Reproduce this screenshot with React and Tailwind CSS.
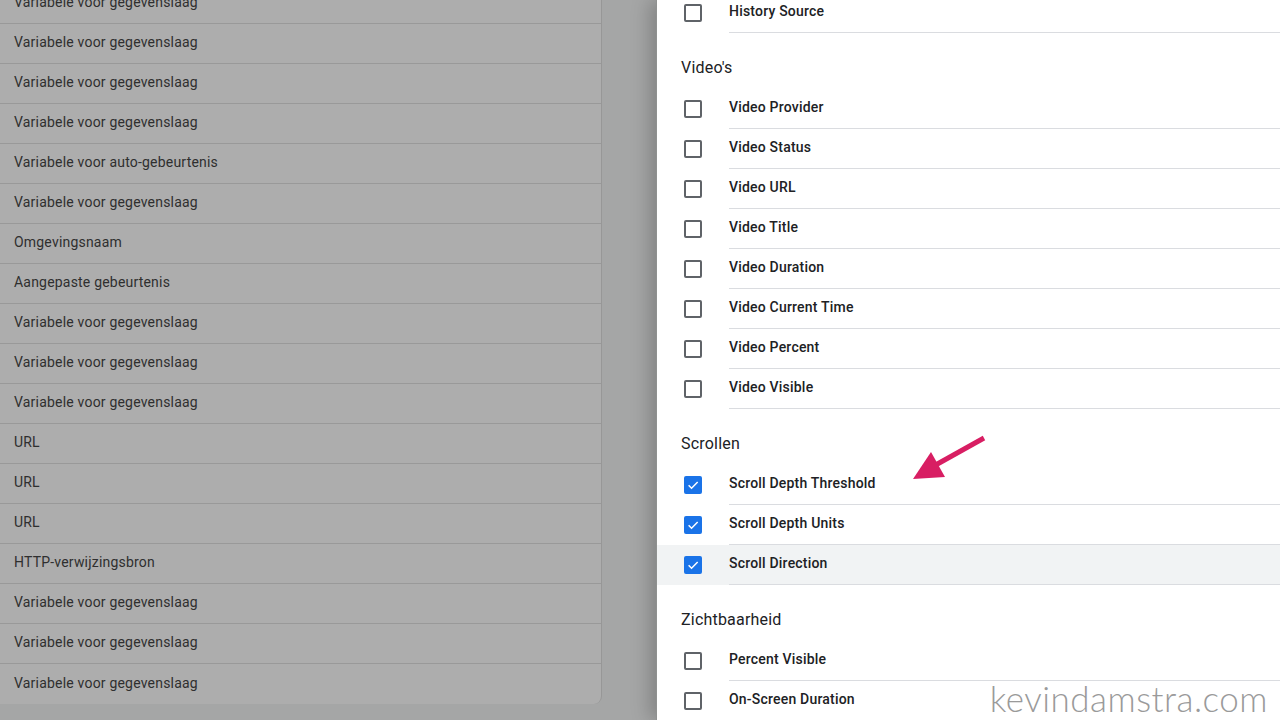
import React from "react";

const leftRows = [
  "Variabele voor gegevenslaag",
  "Variabele voor gegevenslaag",
  "Variabele voor gegevenslaag",
  "Variabele voor gegevenslaag",
  "Variabele voor auto-gebeurtenis",
  "Variabele voor gegevenslaag",
  "Omgevingsnaam",
  "Aangepaste gebeurtenis",
  "Variabele voor gegevenslaag",
  "Variabele voor gegevenslaag",
  "Variabele voor gegevenslaag",
  "URL",
  "URL",
  "URL",
  "HTTP-verwijzingsbron",
  "Variabele voor gegevenslaag",
  "Variabele voor gegevenslaag",
  "Variabele voor gegevenslaag",
];

function Checkbox({ checked }) {
  if (checked) {
    return (
      <div className="w-[18px] h-[18px] rounded-[2px] bg-[#1a73e8] flex items-center justify-center shrink-0">
        <svg width="14" height="14" viewBox="0 0 24 24" fill="none">
          <path d="M4.5 12.5l5 5L20 7" stroke="white" strokeWidth="2.6" />
        </svg>
      </div>
    );
  }
  return <div className="w-[18px] h-[18px] rounded-[2px] border-2 border-[#5f6368] shrink-0" />;
}

function Row({ label, checked, highlight }) {
  return (
    <div className={`flex items-center h-10 ${highlight ? "bg-[#f1f3f4]" : ""}`}>
      <div className="w-[72px] pl-[27px] shrink-0 flex items-center">
        <Checkbox checked={checked} />
      </div>
      <div className="flex-1 h-full flex items-center pb-[2px] border-b border-[#dadce0] text-[14px] font-medium tracking-[0.2px] text-[#202124]">
        {label}
      </div>
    </div>
  );
}

function Header({ children }) {
  return (
    <div className="pl-6 pt-6 pb-[10px] h-14 text-[16px] leading-[22px] tracking-[0.2px] text-[#202124]">{children}</div>
  );
}

export default function App() {
  return (
    <div
      className="relative w-[1280px] h-[720px] overflow-hidden flex bg-[#a5a6a6]"
      style={{ fontFamily: "Roboto, 'Liberation Sans', sans-serif" }}
    >
      <div className="w-[656px] shrink-0">
        <div className="w-[602px] -mt-[16px] bg-[#adadad] border-r border-[#979797] rounded-br-[8px] overflow-hidden">
          {leftRows.map((t, i) => (
            <div
              key={i}
              className={`h-10 flex items-center pl-[14px] pb-[2px] text-[14px] tracking-[0.2px] text-[#2f2f2f] ${
                i < leftRows.length - 1 ? "border-b border-[#999999]" : ""
              }`}
            >
              {t}
            </div>
          ))}
        </div>
      </div>
      <div className="flex-1 bg-white shadow-[-6px_0_18px_rgba(0,0,0,0.22)] border-l border-[#8f9190]">
        <div className="-mt-[7px]">
          <Row label="History Source" />
          <Header>Video's</Header>
          <Row label="Video Provider" />
          <Row label="Video Status" />
          <Row label="Video URL" />
          <Row label="Video Title" />
          <Row label="Video Duration" />
          <Row label="Video Current Time" />
          <Row label="Video Percent" />
          <Row label="Video Visible" />
          <Header>Scrollen</Header>
          <Row label="Scroll Depth Threshold" checked />
          <Row label="Scroll Depth Units" checked />
          <Row label="Scroll Direction" checked highlight />
          <Header>Zichtbaarheid</Header>
          <Row label="Percent Visible" />
          <Row label="On-Screen Duration" />
        </div>
      </div>
      <svg
        className="absolute left-0 top-0 pointer-events-none"
        width="1280"
        height="720"
        viewBox="0 0 1280 720"
      >
        <line x1="984" y1="438" x2="932" y2="467" stroke="#d81e63" strokeWidth="5" />
        <polygon points="913,479 931,452 945,477" fill="#d81e63" />
      </svg>
      <div
        className="absolute right-[12px] bottom-[4px] text-[35px] leading-none text-[#9a9a9a] font-light tracking-[0.5px]"
        style={{ fontFamily: "Lato, sans-serif" }}
      >
        kevindamstra.com
      </div>
    </div>
  );
}
